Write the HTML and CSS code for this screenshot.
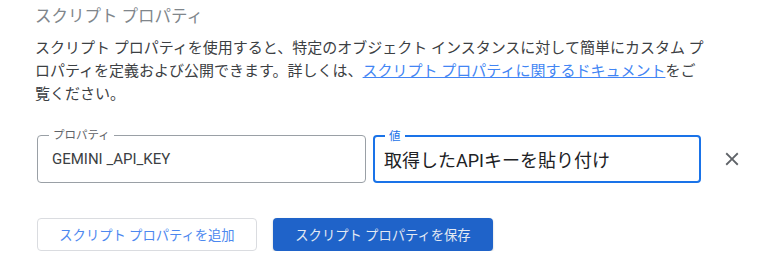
FILE: index.html
```html
<!DOCTYPE html>
<html lang="ja">
<head>
    <meta charset="UTF-8">
    <meta name="viewport" content="width=device-width, initial-scale=1.0">
    <title>スクリプト プロパティ</title>
    <link rel="stylesheet" href="styles.css">
</head>
<body>
    <div class="panel">
        <h2 class="panel-title">スクリプト プロパティ</h2>
        <p class="panel-desc">スクリプト プロパティを使用すると、特定のオブジェクト インスタンスに対して簡単にカスタム プロパティを定義および公開できます。詳しくは、<a href="#" class="doc-link">スクリプト プロパティに関するドキュメント</a>をご覧ください。</p>

        <div class="prop-row">
            <div class="field">
                <label class="field-label">プロパティ</label>
                <input class="field-input" type="text" value="GEMINI _API_KEY">
            </div>
            <div class="field field-focused">
                <label class="field-label">値</label>
                <input class="field-input value-input" type="text" value="取得したAPIキーを貼り付け">
            </div>
            <button class="remove-btn" title="削除">
                <svg width="22" height="22" viewBox="0 0 24 24"><path d="M19 6.41L17.59 5 12 10.59 6.41 5 5 6.41 10.59 12 5 17.59 6.41 19 12 13.41 17.59 19 19 17.59 13.41 12z" fill="#5f6368"/></svg>
            </button>
        </div>

        <div class="buttons">
            <button class="btn add-btn">スクリプト プロパティを追加</button>
            <button class="btn save-btn">スクリプト プロパティを保存</button>
        </div>
    </div>
</body>
</html>
```

FILE: styles.css
```css
body {
    font-family: Roboto, "Noto Sans CJK JP", sans-serif;
    background-color: #fff;
    margin: 0;
    padding: 0;
    color: #3c4043;
}

.panel {
    width: 664px;
    margin-left: 37px;
    padding-top: 5px;
}

.panel-title {
    font-size: 16.5px;
    font-weight: 400;
    line-height: 24px;
    color: #80868b;
    margin: 0 0 8px -2px;
}

.panel-desc {
    font-size: 15px;
    line-height: 23px;
    margin: 0 -4px 0 -2px;
    color: #3c4043;
}

.doc-link {
    color: #4285f4;
    text-decoration: underline;
}

.prop-row {
    display: flex;
    align-items: center;
    gap: 7px;
    margin-top: 29px;
    width: 740px;
}

.field {
    position: relative;
    width: 329px;
    height: 48px;
    box-sizing: border-box;
    border: 1px solid #9aa0a6;
    border-radius: 4px;
    display: flex;
    align-items: center;
    padding-left: 14px;
}

.field-focused {
    width: 328px;
    border: 2px solid #1a73e8;
    padding-left: 9px;
}

.field-label {
    position: absolute;
    top: -8px;
    left: 11px;
    padding: 0 4px;
    background: #fff;
    font-size: 11.5px;
    line-height: 14px;
    color: #5f6368;
}

.field-focused .field-label {
    left: 10px;
    color: #1a73e8;
}

.field-input {
    border: none;
    outline: none;
    padding: 0;
    width: 100%;
    font-family: Roboto, "Noto Sans CJK JP", sans-serif;
    font-size: 15px;
    color: #3c4043;
    background: transparent;
}

.value-input {
    font-size: 18px;
    color: #202124;
}

.remove-btn {
    background: none;
    border: none;
    padding: 0;
    margin-left: 13px;
    width: 22px;
    height: 22px;
    cursor: pointer;
    display: flex;
}

.buttons {
    display: flex;
    gap: 16px;
    margin-top: 35px;
}

.btn {
    width: 220px;
    height: 33px;
    font-family: Roboto, "Noto Sans CJK JP", sans-serif;
    font-size: 13.3px;
    border-radius: 4px;
    cursor: pointer;
}

.add-btn {
    background: #fff;
    color: #4d88ef;
    border: 1px solid #dadce0;
}

.save-btn {
    background: #1f63c9;
    color: #e3e9f3;
    border: none;
    box-shadow: 0 1px 2px rgba(60, 64, 67, 0.3);
}
```
